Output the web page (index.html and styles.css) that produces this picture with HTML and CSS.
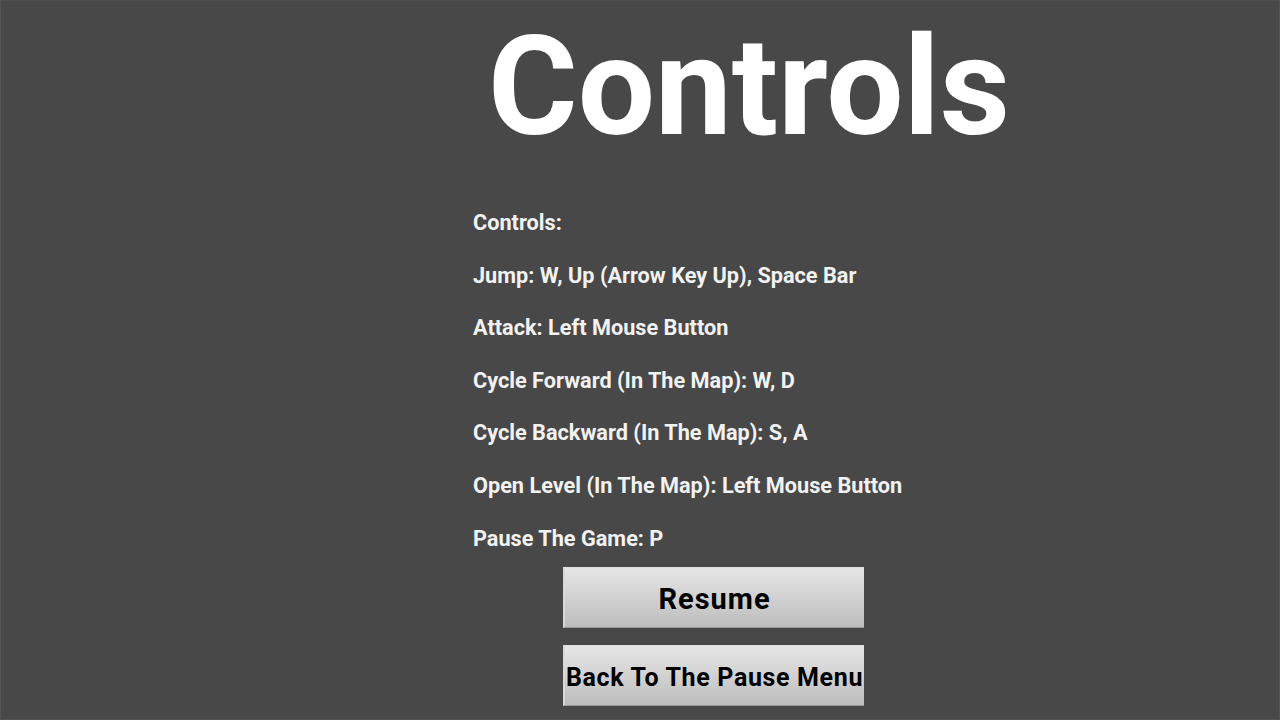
FILE: index.html
```html
<!DOCTYPE html>
<html>
<head>
<meta charset="utf-8">
<link rel="stylesheet" href="styles.css">
</head>
<body>
<div class="screen">
  <div class="column">
    <h1 class="title">Controls</h1>
    <div class="list">
      <p class="line">Controls:</p>
      <p class="line">Jump: W, Up (Arrow Key Up), Space Bar</p>
      <p class="line">Attack: Left Mouse Button</p>
      <p class="line">Cycle Forward (In The Map): W, D</p>
      <p class="line">Cycle Backward (In The Map): S, A</p>
      <p class="line">Open Level (In The Map): Left Mouse Button</p>
      <p class="line">Pause The Game: P</p>
    </div>
    <div class="buttons">
      <button class="btn btn-big">Resume</button>
      <button class="btn btn-small">Back To The Pause Menu</button>
    </div>
  </div>
</div>
</body>
</html>
```
FILE: styles.css
```css
html, body {
  margin: 0;
  padding: 0;
}
body {
  background: #484848;
  font-family: Roboto, "Liberation Sans", sans-serif;
}
.screen {
  width: 1280px;
  height: 720px;
  overflow: hidden;
  box-sizing: border-box;
  border: 1px solid #555;
  border-top-color: #4e4e4e;
}
.column {
  margin-left: 472px;
  display: flex;
  flex-direction: column;
}
.title {
  margin: 0 0 0 15px;
  padding-top: 16px;
  font-size: 137px;
  line-height: 140px;
  font-weight: 700;
  color: #ffffff;
}
.list {
  margin-top: 52px;
  display: flex;
  flex-direction: column;
}
.line {
  margin: 0;
  height: 52.6px;
  line-height: 28px;
  font-size: 21.7px;
  font-weight: 700;
  color: #f2f2f2;
}
.buttons {
  margin-top: -10px;
  margin-left: 90px;
  display: flex;
  flex-direction: column;
  gap: 17px;
}
.btn {
  width: 301px;
  height: 61px;
  padding: 3px 0 0 0;
  border: none;
  border-left: 2px solid #d8d8d8;
  border-top: 1px solid #e0e0e0;
  border-bottom: 1px solid #9a9a9a;
  background: linear-gradient(#e6e6e6, #bdbdbd);
  color: #000;
  font-family: Roboto, "Liberation Sans", sans-serif;
  font-weight: 700;
  text-align: center;
  box-sizing: border-box;
}
.btn-big {
  font-size: 29px;
  letter-spacing: 1px;
}
.btn-small {
  font-size: 25px;
  letter-spacing: 0.65px;
  white-space: nowrap;
}
```
